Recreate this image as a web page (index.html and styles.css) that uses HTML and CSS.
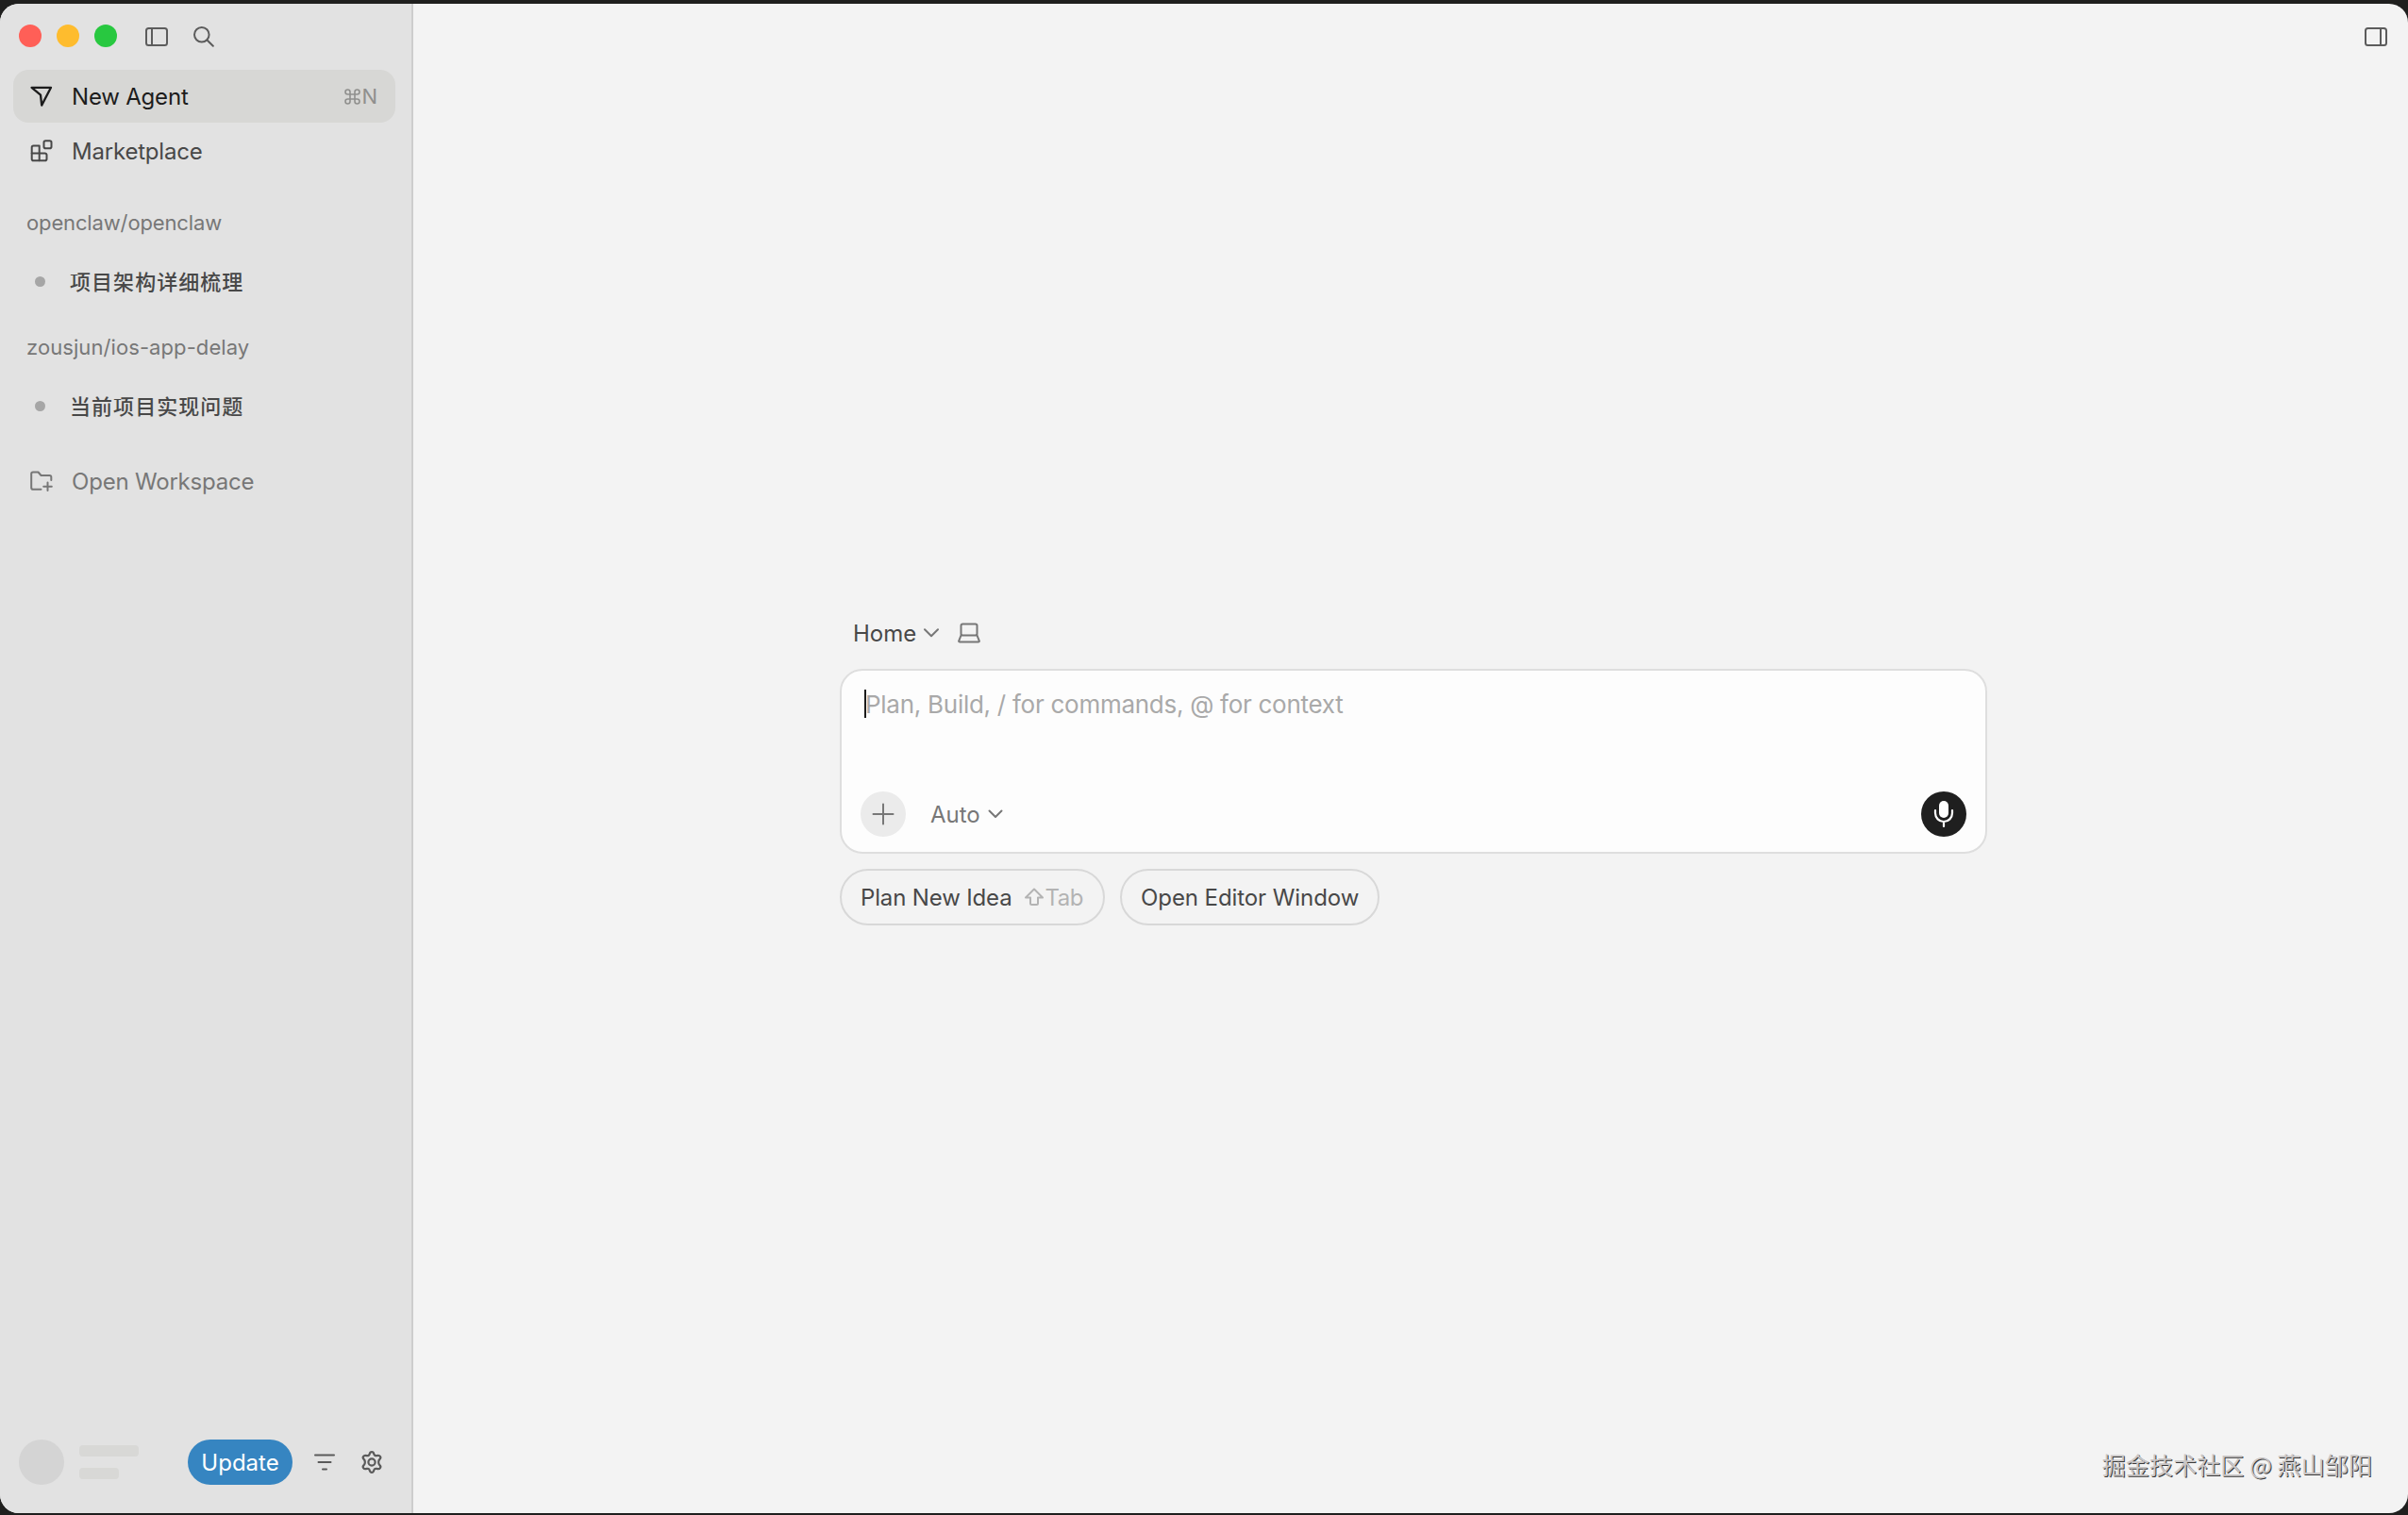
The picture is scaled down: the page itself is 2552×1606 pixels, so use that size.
FILE: index.html
```html
<!DOCTYPE html>
<html lang="en">
<head>
    <meta charset="UTF-8">
    <meta name="viewport" content="width=device-width, initial-scale=1.0">
    <title>New Agent</title>
    <link rel="stylesheet" href="styles.css">
</head>
<body>
    <div class="window">
        <aside class="sidebar">
            <div class="titlebar">
                <span class="light red"></span>
                <span class="light yellow"></span>
                <span class="light green"></span>
                <svg class="icon toggle" width="24" height="20" viewBox="0 0 24 20">
                    <rect x="1" y="1" width="22" height="18" rx="2.5"/>
                    <path d="M7 1v18"/>
                </svg>
                <svg class="icon search" width="22" height="22" viewBox="0 0 22 22">
                    <circle cx="8.8" cy="8.8" r="7.8"/>
                    <path d="M14.5 14.5l6.3 6.3"/>
                </svg>
            </div>

            <nav class="nav">
                <a class="nav-item active">
                    <svg class="icon" width="24" height="24" viewBox="0 0 24 24">
                        <path d="M1.6 2.8H22L12.2 21.6L11 10.6z"/>
                    </svg>
                    <span class="label">New Agent</span>
                    <span class="shortcut"><svg class="icon cmd" width="17" height="17" viewBox="0 0 17 17"><path d="M6 6h5v5H6zM6 6H3.5A2.5 2.5 0 1 1 6 3.5zM11 6V3.5A2.5 2.5 0 1 1 13.5 6zM11 11h2.5A2.5 2.5 0 1 1 11 13.5zM6 11v2.5A2.5 2.5 0 1 1 3.5 11z"/></svg>N</span>
                </a>
                <a class="nav-item">
                    <svg class="icon" width="24" height="24" viewBox="0 0 24 24">
                        <path d="M3.5 6.5H9.7V22.2H3.5A1.8 1.8 0 0 1 1.7 20.4V8.3A1.8 1.8 0 0 1 3.5 6.5z"/>
                        <path d="M1.7 14.4H15.7A1.8 1.8 0 0 1 17.5 16.2V20.4A1.8 1.8 0 0 1 15.7 22.2H9.7"/>
                        <rect x="14.5" y="1.2" width="8" height="8" rx="1.8"/>
                    </svg>
                    <span class="label">Marketplace</span>
                </a>
            </nav>

            <h4 class="group">openclaw/openclaw</h4>
            <a class="task"><span class="dot"></span><span class="task-name">项目架构详细梳理</span></a>

            <h4 class="group wide">zousjun/ios-app-delay</h4>
            <a class="task"><span class="dot"></span><span class="task-name">当前项目实现问题</span></a>

            <a class="nav-item workspace">
                <svg class="icon" width="24" height="24" viewBox="0 0 24 24">
                    <path d="M11.5 20.7H3A1.8 1.8 0 0 1 1.2 18.9V4.3A1.8 1.8 0 0 1 3 2.5H8.5L11.5 6H20.5A1.8 1.8 0 0 1 22.3 7.8V11"/>
                    <path d="M18.5 13.5v8.5M14.2 17.7h8.6"/>
                </svg>
                <span class="label">Open Workspace</span>
            </a>

            <div class="footer">
                <span class="avatar"></span>
                <div class="user">
                    <span class="bar"></span>
                    <span class="bar short"></span>
                </div>
                <button class="update">Update</button>
                <svg class="icon filter" width="24" height="24" viewBox="0 0 24 24">
                    <path d="M2 4.5h20M5.5 12h13M10 19.5h4"/>
                </svg>
                <svg class="icon gear" width="24" height="24" viewBox="0 0 24 24">
                    <path d="M9.7 3.4C10.3 0.4 13.7 0.4 14.3 3.4C14.7 4.8 16 5.5 17.3 5.1C20.6 4.1 22.7 7 20.2 9.1C18.8 10.5 18.8 13.5 20.2 14.9C22.7 17 20.6 19.9 17.3 18.9C16 18.5 14.7 19.2 14.3 20.6C13.7 23.6 10.3 23.6 9.7 20.6C9.3 19.2 8 18.5 6.7 18.9C3.4 19.9 1.3 17 3.8 14.9C5.2 13.5 5.2 10.5 3.8 9.1C1.3 7 3.4 4.1 6.7 5.1C8 5.5 9.3 4.8 9.7 3.4z"/>
                    <circle cx="12" cy="12" r="3.6"/>
                </svg>
            </div>
        </aside>

        <main class="main">
            <header class="main-header">
                <svg class="icon" width="24" height="20" viewBox="0 0 24 20">
                    <rect x="1" y="1" width="22" height="18" rx="2.5"/>
                    <path d="M17 1v18"/>
                </svg>
            </header>

            <section class="composer">
                <div class="location">
                    <span class="home">Home</span>
                    <svg class="icon chevron" width="16" height="10" viewBox="0 0 16 10"><path d="M1 1.2l7 7L15 1.2"/></svg>
                    <svg class="icon laptop" width="24" height="22" viewBox="0 0 24 22">
                        <rect x="3.5" y="1.5" width="17" height="12" rx="1.8"/>
                        <path d="M3.5 13.5L1.2 19.3Q1 20.5 2.2 20.5H21.8Q23 20.5 22.8 19.3L20.5 13.5"/>
                    </svg>
                </div>

                <div class="prompt">
                    <div class="placeholder"><span class="caret"></span>Plan, Build, / for commands, @ for context</div>
                    <div class="tools">
                        <button class="round add">
                            <svg class="icon" width="24" height="24" viewBox="0 0 24 24"><path d="M12 1.5v21M1.5 12h21"/></svg>
                        </button>
                        <span class="model">Auto</span>
                        <svg class="icon chevron" width="16" height="10" viewBox="0 0 16 10"><path d="M1.5 1.5l6.5 6.5L14.5 1.5"/></svg>
                        <button class="round mic">
                            <svg width="24" height="30" viewBox="0 0 24 30">
                                <rect class="mic-body" x="7" y="1" width="10" height="18" rx="5"/>
                                <path class="mic-stand" d="M3 11V14A9 9 0 0 0 21 14V11M12 23v5"/>
                            </svg>
                        </button>
                    </div>
                </div>

                <div class="actions">
                    <button class="pill plan">Plan New Idea
                        <svg class="icon shift" width="22" height="20" viewBox="0 0 22 20"><path d="M11 1.5L20 10.5H15V16.5Q15 18 13.5 18H8.5Q7 18 7 16.5V10.5H2z"/></svg><span class="key">Tab</span></button>
                    <button class="pill editor">Open Editor Window</button>
                </div>
            </section>

            <p class="watermark">掘金技术社区 @ 燕山邹阳</p>
        </main>
    </div>
</body>
</html>
```

FILE: styles.css
```css
* {
    box-sizing: border-box;
}
body {
    margin: 0;
    height: 100vh;
    padding: 4px 0 2px;
    background-color: #1f1f1e;
    color: #484848;
    font-family: Inter, "Noto Sans CJK SC", sans-serif;
    font-size: 24px;
    overflow: hidden;
}
button {
    border: none;
    padding: 0;
    font: inherit;
    color: inherit;
    background: none;
}
.window {
    display: flex;
    height: 100%;
    border-radius: 20px;
    overflow: hidden;
    background-color: #f3f3f3;
}
.icon {
    fill: none;
    stroke: currentColor;
    stroke-width: 2;
    stroke-linecap: round;
    stroke-linejoin: round;
    flex: none;
}

/* Sidebar */
.sidebar {
    display: flex;
    flex-direction: column;
    width: 438px;
    background-color: #e2e2e2;
    border-right: 2px solid #cdcdcd;
}
.titlebar {
    display: flex;
    align-items: center;
    height: 68px;
    padding-left: 20px;
    color: #5c5c5c;
}
.light {
    width: 24px;
    height: 24px;
    margin-right: 16px;
    border-radius: 50%;
}
.red {
    background-color: #ff5f57;
}
.yellow {
    background-color: #febc2e;
}
.green {
    background-color: #28c840;
}
.toggle {
    margin: 1px 0 0 14px;
}
.search {
    margin: 1px 0 0 27px;
}
.nav {
    padding: 2px 17px 0 14px;
}
.nav-item {
    display: flex;
    align-items: center;
    height: 56px;
    padding: 0 19px 0 18px;
    border-radius: 16px;
    margin-bottom: 2px;
}
.nav-item .label {
    flex: 1;
    margin-left: 20px;
    letter-spacing: -0.2px;
}
.active {
    background-color: #d7d7d5;
    color: #1c1c1c;
}
.active .icon {
    stroke-width: 2.3;
}
.shortcut {
    display: flex;
    align-items: center;
    gap: 1px;
    color: #90908e;
    font-size: 22px;
}
.active .cmd {
    stroke-width: 1.6;
}
.group {
    margin: 22px 0 0;
    padding-left: 28px;
    height: 48px;
    line-height: 48px;
    color: #777;
    font-size: 22px;
    font-weight: 400;
    letter-spacing: -0.14px;
}
.group.wide {
    letter-spacing: 0.08px;
}
.task {
    display: flex;
    align-items: center;
    height: 56px;
    margin-top: 10px;
    padding-left: 37px;
}
.task + .group {
    margin-top: 18px;
}
.dot {
    width: 11px;
    height: 11px;
    border-radius: 50%;
    background-color: #a6a6a6;
}
.task-name {
    margin-left: 26px;
    padding-bottom: 3px;
    font-size: 22px;
    font-weight: 500;
    letter-spacing: 1.05px;
}
.workspace {
    margin: 24px 14px 0;
    color: #777;
}
.footer {
    display: flex;
    align-items: center;
    height: 48px;
    margin: auto 0 30px;
    padding-left: 20px;
    color: #5a5a5a;
}
.avatar {
    width: 48px;
    height: 48px;
    border-radius: 50%;
    background-color: #d4d4d4;
}
.user {
    display: flex;
    flex-direction: column;
    gap: 12px;
    width: 131px;
    padding-left: 16px;
}
.bar {
    width: 63px;
    height: 12px;
    border-radius: 4px;
    background-color: #d8d8d6;
}
.bar.short {
    width: 42px;
}
.update {
    width: 111px;
    height: 48px;
    border-radius: 24px;
    background-color: #3685c1;
    color: #fff;
}
.filter {
    margin-left: 22px;
}
.gear {
    margin-left: 26px;
    stroke-width: 2.2;
}

/* Main area */
.main {
    display: flex;
    flex-direction: column;
    flex: 1;
}
.main-header {
    display: flex;
    justify-content: flex-end;
    padding: 25px 22px 0 0;
    color: #5c5c5c;
}
.composer {
    width: 1216px;
    margin: 594px auto 0 452px;
}
.location {
    display: flex;
    align-items: center;
    height: 56px;
    padding-left: 14px;
}
.location .chevron {
    margin-left: 8px;
    color: #777;
}
.laptop {
    margin-left: 20px;
    color: #777;
}
.prompt {
    display: flex;
    flex-direction: column;
    justify-content: space-between;
    height: 196px;
    margin-top: 10px;
    padding: 19px 20px 16px;
    border: 2px solid #dedede;
    border-radius: 24px;
    background-color: #fdfdfd;
}
.placeholder {
    display: flex;
    align-items: center;
    height: 32px;
    padding-left: 4px;
    color: #a9a9a9;
    font-size: 26px;
    letter-spacing: -0.27px;
}
.caret {
    width: 2px;
    height: 30px;
    margin-right: -1px;
    background-color: #1c1c1c;
}
.tools {
    display: flex;
    align-items: center;
    color: #777;
}
.round {
    display: flex;
    align-items: center;
    justify-content: center;
    width: 48px;
    height: 48px;
    border-radius: 50%;
}
.add {
    background-color: #ebebeb;
}
.model {
    margin-left: 26px;
}
.tools .chevron {
    margin-left: 8px;
}
.mic {
    margin-left: auto;
    background-color: #1f1f1f;
}
.mic-body {
    fill: #fff;
}
.mic-stand {
    fill: none;
    stroke: #fff;
    stroke-width: 2.2;
    stroke-linecap: round;
}
.actions {
    display: flex;
    gap: 16px;
    margin-top: 16px;
}
.pill {
    display: flex;
    align-items: center;
    height: 60px;
    padding-left: 20px;
    border: 2px solid #d8d8d8;
    border-radius: 30px;
    letter-spacing: -0.15px;
    white-space: nowrap;
}
.plan {
    width: 281px;
}
.editor {
    width: 275px;
    letter-spacing: -0.08px;
}
.shift {
    margin-left: 13px;
    color: #b3b3b3;
}
.key {
    color: #b3b3b3;
    letter-spacing: -0.5px;
}
.watermark {
    margin: auto 38px 34px auto;
    color: #c9c6c6;
    font-family: "Noto Sans CJK SC", sans-serif;
    font-size: 25px;
    line-height: 36px;
    letter-spacing: 0.1px;
    text-shadow: 1px 1px 0 #3a3a3a;
}
```
